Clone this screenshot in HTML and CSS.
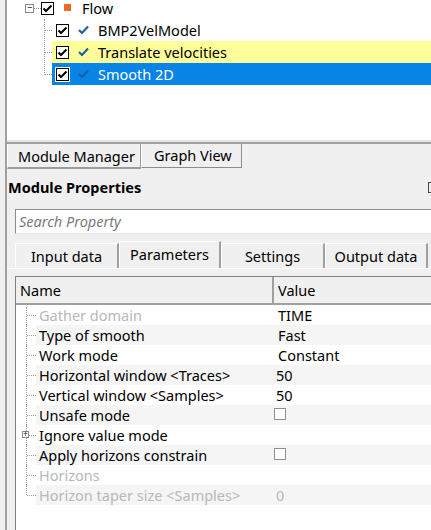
FILE: index.html
```html
<!DOCTYPE html>
<html>
<head>
	<link rel="stylesheet" href="styles.css">
	<title>Module Properties</title>
</head>
<body>
	<div id="app">
		<div class="flowTree">
			<div class="treeRow rootRow">
				<span class="expander">&minus;</span>
				<span class="hDots rootDots"></span>
				<span class="treeCheck"><svg width="11" height="11" viewBox="0 0 11 11"><polyline points="1.5,5.5 4,8 9.5,2.5" fill="none" stroke="#000" stroke-width="2"/></svg></span>
				<span class="flowMark"></span>
				<span class="treeLabel">Flow</span>
			</div>
			<div class="childRows">
				<div class="treeRow childRow">
					<span class="hDots"></span>
					<div class="rowBody">
						<span class="treeCheck"><svg width="11" height="11" viewBox="0 0 11 11"><polyline points="1.5,5.5 4,8 9.5,2.5" fill="none" stroke="#000" stroke-width="2"/></svg></span>
						<svg class="moduleTick" width="11" height="10" viewBox="0 0 11 10"><polyline points="1,5 4,8 10,1.5" fill="none" stroke="#1f5fa6" stroke-width="2.2"/></svg>
						<span class="treeLabel">BMP2VelModel</span>
					</div>
				</div>
				<div class="treeRow childRow">
					<span class="hDots"></span>
					<div class="rowBody marked">
						<span class="treeCheck"><svg width="11" height="11" viewBox="0 0 11 11"><polyline points="1.5,5.5 4,8 9.5,2.5" fill="none" stroke="#000" stroke-width="2"/></svg></span>
						<svg class="moduleTick" width="11" height="10" viewBox="0 0 11 10"><polyline points="1,5 4,8 10,1.5" fill="none" stroke="#1f5fa6" stroke-width="2.2"/></svg>
						<span class="treeLabel">Translate velocities</span>
					</div>
				</div>
				<div class="treeRow childRow lastChild">
					<span class="hDots"></span>
					<div class="rowBody selected">
						<span class="treeCheck"><svg width="11" height="11" viewBox="0 0 11 11"><polyline points="1.5,5.5 4,8 9.5,2.5" fill="none" stroke="#000" stroke-width="2"/></svg></span>
						<svg class="moduleTick" width="11" height="10" viewBox="0 0 11 10"><polyline points="1,5 4,8 10,1.5" fill="none" stroke="#1c5ea6" stroke-width="2.2"/></svg>
						<span class="treeLabel">Smooth 2D</span>
					</div>
				</div>
			</div>
		</div>

		<div class="viewTabs">
			<div class="viewTab activeView">Module Manager</div>
			<div class="viewTab">Graph View</div>
		</div>

		<div class="panelTitle">
			Module Properties
			<span class="titleIcon"></span>
		</div>

		<div class="searchBox">Search Property</div>

		<div class="propTabs">
			<div class="propTab tabInput">Input data</div>
			<div class="propTab tabParams activeTab">Parameters</div>
			<div class="propTab tabSettings">Settings</div>
			<div class="propTab tabOutput">Output data</div>
		</div>

		<div class="tabPanel">
			<div class="propGrid">
				<div class="gridHead">
					<div class="headName">Name</div>
					<div class="headValue">Value</div>
				</div>
				<div class="propRows">
					<div class="propRow">
						<div class="gutter"></div>
						<div class="propName disabled">Gather domain</div>
						<div class="propValue">TIME</div>
					</div>
					<div class="propRow striped">
						<div class="gutter"></div>
						<div class="propName">Type of smooth</div>
						<div class="propValue">Fast</div>
					</div>
					<div class="propRow">
						<div class="gutter"></div>
						<div class="propName">Work mode</div>
						<div class="propValue">Constant</div>
					</div>
					<div class="propRow striped">
						<div class="gutter"></div>
						<div class="propName">Horizontal window &lt;Traces&gt;</div>
						<div class="propValue number">50</div>
					</div>
					<div class="propRow">
						<div class="gutter"></div>
						<div class="propName">Vertical window &lt;Samples&gt;</div>
						<div class="propValue number">50</div>
					</div>
					<div class="propRow striped">
						<div class="gutter"></div>
						<div class="propName">Unsafe mode</div>
						<div class="propValue"><span class="valueCheck"></span></div>
					</div>
					<div class="propRow">
						<div class="gutter"><span class="plusBox">+</span></div>
						<div class="propName">Ignore value mode</div>
						<div class="propValue"></div>
					</div>
					<div class="propRow striped">
						<div class="gutter"></div>
						<div class="propName">Apply horizons constrain</div>
						<div class="propValue"><span class="valueCheck"></span></div>
					</div>
					<div class="propRow">
						<div class="gutter"></div>
						<div class="propName disabled">Horizons</div>
						<div class="propValue"></div>
					</div>
					<div class="propRow striped lastRow">
						<div class="gutter"></div>
						<div class="propName disabled">Horizon taper size &lt;Samples&gt;</div>
						<div class="propValue number disabled">0</div>
					</div>
				</div>
			</div>
		</div>
	</div>
</body>
</html>
```

FILE: styles.css
```css
body{
	margin: 0;
	width: 431px;
	height: 530px;
	overflow: hidden;
	background-color: #f0f0f0;
	font-family: 'Noto Sans', sans-serif;
	font-size: 14.5px;
	color: #000;
}
#app{
	margin-left: 5px;
	width: 470px;
	height: 530px;
	border-left: 2px solid #a0a0a0;
}

/* flow tree */
.flowTree{
	height: 140px;
	background-color: #fff;
	border-bottom: 2px solid #e6e6e6;
	box-shadow: 0 2px 0 #a0a0a0;
	overflow: hidden;
}
.treeRow{
	height: 22px;
	display: flex;
	align-items: center;
	position: relative;
}
.rootRow{
	height: 17px;
	line-height: 17px;
	padding-left: 18px;
}
.expander{
	width: 7px;
	height: 7px;
	border: 1px solid #8c8c8c;
	font-size: 9px;
	line-height: 6px;
	text-align: center;
	color: #000;
	background-color: #fff;
}
.hDots{
	display: block;
	height: 0;
	border-top: 1px dotted #999;
}
.rootDots{
	width: 7px;
}
.treeCheck{
	width: 11px;
	height: 11px;
	border: 1px solid #000;
	background-color: #fff;
	display: flex;
}
.flowMark{
	width: 7px;
	height: 7px;
	margin-left: 10px;
	margin-top: -3px;
	background-color: #ef6a21;
}
.rootRow .treeLabel{
	margin-left: 11px;
}
.childRows{
	margin-left: 37px;
	margin-top: 1px;
	position: relative;
}
.childRows .treeRow:first-child{
	margin-top: 2px;
}
.childRows::before{
	content: "";
	position: absolute;
	left: 0;
	top: 0;
	height: 56px;
	border-left: 1px dotted #999;
}
.childRow .hDots{
	width: 8px;
}
.rowBody{
	flex: 1;
	height: 22px;
	display: flex;
	align-items: center;
	padding-left: 4px;
}
.rowBody.marked{
	background-color: #ffff9a;
}
.rowBody.selected{
	background-color: #0883e6;
	color: #fff;
}
.selected .treeCheck{
	outline: 1px solid #fff;
}
.moduleTick{
	margin-left: 9px;
}
.childRow .treeLabel{
	margin-left: 9px;
}

/* bottom view tabs */
.viewTabs{
	display: flex;
	margin-top: 2px;
	height: 25px;
	align-items: flex-start;
}
.viewTab{
	height: 23px;
	line-height: 23px;
	padding: 0 9px 0 12px;
	white-space: nowrap;
	border-left: 1px solid #fff;
	border-right: 1px solid #8c8c8c;
	border-bottom: 1px solid #8c8c8c;
	cursor: default;
}
.activeView{
	width: 112px;
	padding: 0 10px;
	height: 23px;
	line-height: 25px;
	border-bottom: 2px solid #9c9c9c;
	border-right: 1px solid #9c9c9c;
}

.panelTitle{
	height: 36px;
	line-height: 37px;
	padding-left: 1px;
	font-weight: bold;
	position: relative;
}
.titleIcon{
	position: absolute;
	left: 421px;
	top: 13px;
	width: 8px;
	height: 9px;
	border: 1px solid #444;
}

.searchBox{
	margin: 4px 0 0 8px;
	height: 23px;
	line-height: 23px;
	padding-left: 3px;
	border: 1px solid #e3e3e3;
	border-top-color: #8c8c8c;
	border-left-color: #8c8c8c;
	background-color: #fff;
	color: #7a7a7a;
	font-style: italic;
}

/* property tabs */
.propTabs{
	display: flex;
	align-items: flex-end;
	margin: 7px 0 0 8px;
	height: 27px;
}
.propTab{
	height: 24px;
	line-height: 25px;
	text-align: center;
	border-top: 1px solid #fff;
	border-left: 1px solid #fff;
	border-right: 2px solid #a0a0a0;
	box-sizing: content-box;
}
.tabInput{ width: 101px; }
.tabParams{ width: 99px; }
.tabSettings{ width: 101px; }
.tabOutput{ width: 100px; }
.activeTab{
	height: 26px;
	line-height: 24px;
}

.tabPanel{
	border-top: 1px solid #fff;
	padding: 7px 0 0 8px;
}
.propGrid{
	border-top: 1px solid #828282;
	border-left: 1px solid #828282;
	background-color: #fff;
	height: 260px;
}
.gridHead{
	display: flex;
	height: 26px;
	line-height: 27px;
	background-color: #f0f0f0;
	border-bottom: 2px solid #a0a0a0;
}
.headName{
	width: 252px;
	padding-left: 4px;
	border-right: 2px solid #a0a0a0;
}
.headValue{
	padding-left: 4px;
}

.propRow{
	display: flex;
	height: 20px;
	line-height: 21px;
}
.gutter{
	width: 20px;
	flex: none;
	position: relative;
}
.gutter::before{
	content: "";
	position: absolute;
	left: 10px;
	top: 0;
	height: 20px;
	border-left: 1px dotted #999;
}
.lastRow .gutter::before{
	height: 10px;
}
.propRows .propRow:first-child .gutter::before{
	top: 2px;
	height: 18px;
}
.gutter::after{
	content: "";
	position: absolute;
	left: 11px;
	top: 10px;
	width: 9px;
	border-top: 1px dotted #999;
}
.plusBox{
	position: absolute;
	left: 6px;
	top: 6px;
	width: 7px;
	height: 7px;
	box-sizing: border-box;
	border: 1px solid #8c8c8c;
	background-color: #fff;
	font-size: 8px;
	line-height: 4px;
	text-align: center;
	z-index: 1;
}
.propName{
	width: 234px;
	flex: none;
	padding-left: 3px;
}
.propValue{
	flex: 1;
	padding-left: 5px;
}
.propValue.number{
	padding-left: 3px;
}
.striped .propName,
.striped .propValue{
	background-color: #f5f5f5;
}
.disabled{
	color: #b8b8b8;
}
.valueCheck{
	display: inline-block;
	width: 10px;
	height: 10px;
	margin: 3px 0 0 -4px;
	vertical-align: top;
	border: 1px solid #8f8f8f;
	background-color: #fff;
}
```
